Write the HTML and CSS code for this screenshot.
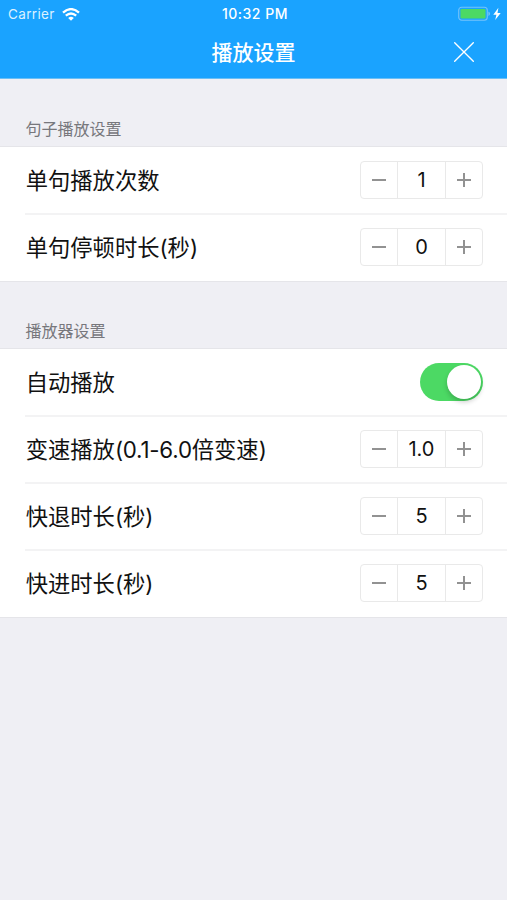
FILE: index.html
```html
<!DOCTYPE html>
<html lang="zh-CN">
<head>
<meta charset="utf-8">
<title>播放设置</title>
<link rel="stylesheet" href="styles.css">
</head>
<body>
<header class="header">
  <div class="status">
    <div class="carrier"><span>Carrier</span>
      <svg class="wifi" width="18" height="13" viewBox="0 0 18 13" fill="none" stroke="#fff" stroke-width="2.3"><path d="M1 4.7Q9-2.5 17 4.7"/><path d="M3.8 7.7Q9 3.2 14.2 7.7"/><path d="M6.2 9.9Q9 7.5 11.8 9.9L9 12.7Z" fill="#fff" stroke="none"/></svg>
    </div>
    <div class="time">10:32 PM</div>
    <div class="power">
      <svg width="44" height="16" viewBox="0 0 44 16"><rect x=".7" y="1.2" width="28.6" height="13.1" rx="3" fill="none" stroke="#74c3fb" stroke-width="1.1"/><rect x="2.5" y="3" width="25" height="9.6" rx="1.3" fill="#4cd964"/><path d="M30.4 5.6q1.7.7 1.7 2.2t-1.7 2.2z" fill="#74c3fb"/><path d="M40.4 1.8L35.3 8.7H38.4L37.2 14L42.7 6.9H39.5Z" fill="#fff"/></svg>
    </div>
  </div>
  <div class="nav">
    <h1 class="title">播放设置</h1>
    <svg class="close" width="20" height="20" viewBox="0 0 20 20" stroke="#fff" stroke-width="1.35" stroke-linecap="round"><path d="M.7.7L19.3 19.3M19.3.7L.7 19.3"/></svg>
  </div>
</header>
<main>
  <h2 class="section">句子播放设置</h2>
  <div class="group">
    <div class="row"><span class="label">单句播放次数</span><div class="stepper"><i class="minus"></i><b>1</b><i class="plus"></i></div></div>
    <div class="row"><span class="label">单句停顿时长(秒)</span><div class="stepper"><i class="minus"></i><b>0</b><i class="plus"></i></div></div>
  </div>
  <h2 class="section">播放器设置</h2>
  <div class="group">
    <div class="row"><span class="label">自动播放</span><div class="switch"><div class="knob"></div></div></div>
    <div class="row"><span class="label">变速播放<span class="range">(0.1-6.0</span>倍变速)</span><div class="stepper"><i class="minus"></i><b>1.0</b><i class="plus"></i></div></div>
    <div class="row"><span class="label">快退时长(秒)</span><div class="stepper"><i class="minus"></i><b>5</b><i class="plus"></i></div></div>
    <div class="row"><span class="label">快进时长(秒)</span><div class="stepper"><i class="minus"></i><b>5</b><i class="plus"></i></div></div>
  </div>
</main>
</body>
</html>
```
FILE: styles.css
```css
* { box-sizing: border-box; }
body {
  margin: 0;
  min-height: 900px;
  background: #efeff4;
  font-family: Inter, "Noto Sans CJK SC", sans-serif;
  color: #111;
}
.header {
  height: 79px;
  background: #1aa3ff;
  border-bottom: 1px solid #6bbff6;
  color: #fff;
}
.status {
  height: 27px;
  display: grid;
  grid-template-columns: 1fr auto 1fr;
  align-items: center;
  padding: 0 5px 0 8px;
  font-size: 13.5px;
  line-height: 28px;
}
.carrier { display: flex; align-items: center; gap: 7px; color: #dcf1ff; letter-spacing: .35px; }
.time { font-weight: 500; font-size: 14px; letter-spacing: .5px; }
.power { display: flex; justify-content: flex-end; }
.nav {
  height: 51px;
  display: grid;
  grid-template-columns: 1fr auto 1fr;
  align-items: center;
  padding: 0 33px;
}
.title { grid-column: 2; margin: 0; font-size: 21px; font-weight: 500; line-height: 50px; }
.close { justify-self: end; margin-bottom: 2px; }
.section {
  height: 68px;
  margin: 0;
  padding: 37px 0 0 25.5px;
  font-size: 16px;
  font-weight: 400;
  line-height: 26px;
  color: #77777c;
}
.group {
  background: #fff;
  box-shadow: 0 -1px #e5e5e9, 0 1px #e5e5e9;
}
.row {
  height: 67px;
  margin-left: 25px;
  padding-right: 24px;
  display: flex;
  justify-content: space-between;
  align-items: center;
}
.row + .row { border-top: 2px solid #f3f3f4; margin-top: -1px; height: 68px; }
.label { padding-left: .7px; font-size: 22.3px; line-height: 32px; white-space: nowrap; }
.range { letter-spacing: -.2px; }
.stepper {
  width: 123px;
  height: 38px;
  margin-bottom: 2px;
  display: grid;
  grid-template-columns: 36px 1fr 36px;
  border: 1px solid #e9e9e9;
  border-radius: 4px;
}
.stepper b {
  border: solid #e9e9e9;
  border-width: 0 1px;
  font-size: 20px;
  font-weight: 400;
  line-height: 36px;
  text-align: center;
}
.minus, .plus {
  background: linear-gradient(#929292, #929292) center / 14px 2px no-repeat;
}
.plus {
  background: linear-gradient(#929292, #929292) center / 14px 2px no-repeat,
    linear-gradient(#929292, #929292) center / 2px 14px no-repeat;
}
.switch {
  width: 63px;
  height: 38px;
  margin-bottom: 1px;
  padding: 2px;
  border-radius: 19px;
  background: #4cd964;
  display: flex;
  justify-content: flex-end;
}
.knob {
  width: 34px;
  height: 34px;
  border-radius: 50%;
  background: #fff;
  box-shadow: 0 3px 5px rgba(0,0,0,.2);
}
```
